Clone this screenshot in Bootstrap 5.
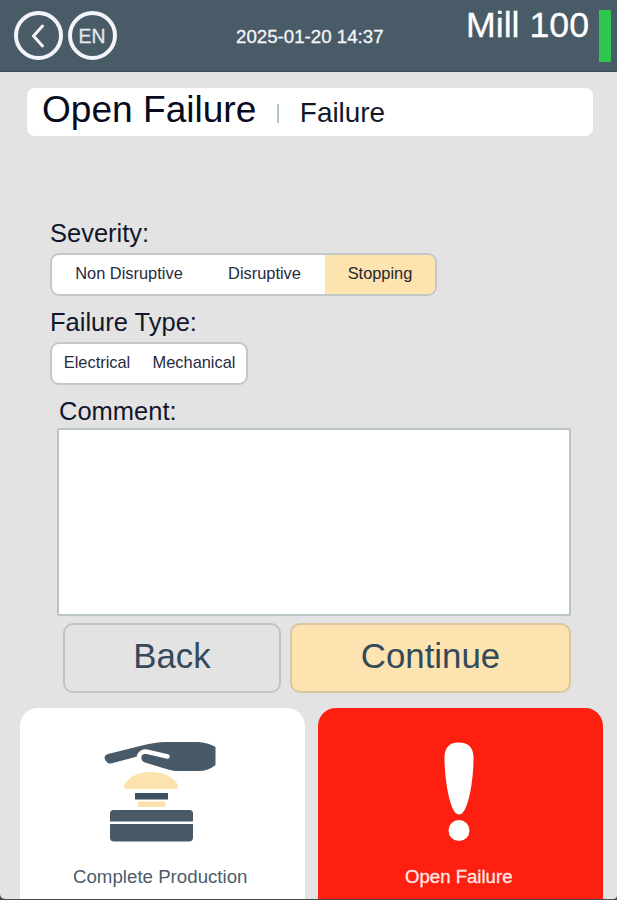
<!DOCTYPE html>
<html lang="en">
<head>
<meta charset="utf-8">
<meta name="viewport" content="width=device-width, initial-scale=1">
<title>Open Failure</title>
<link href="https://cdn.jsdelivr.net/npm/bootstrap@5.3.0/dist/css/bootstrap.min.css" rel="stylesheet">
<style>
body{background:#4a4a4a;font-family:"Liberation Sans",Arial,sans-serif;color:#12172b;height:900px;overflow:hidden;line-height:1}
.screen{height:899px;background:#e3e3e3;border-radius:0 0 4px 5px;overflow:hidden}
.topbar{height:72px;background:#4a5b68;border-bottom:1px solid #3d4b56;padding:0 6px 0 14px;color:#fff}
.round-btn{width:49px;height:49px;border:4px solid #f2f4fa;border-radius:50%;background:none;color:#e3e8ee;font-size:19.3px;padding:2px 0 0;-webkit-text-stroke:.3px #e3e8ee}
.round-btn.arrow{padding:0}
.round-btn + .round-btn{margin-left:4.5px}
.clock{font-size:18.7px;color:#f4f6f8;margin-left:119.5px;padding-top:3px;-webkit-text-stroke:.3px #f4f6f8}
.station{font-size:35.7px;height:52px;line-height:31px;-webkit-text-stroke:.3px #fff}
.status-bar{width:12px;height:52px;background:#2dc84d;margin-left:10px}
.title-box{margin:16px 24px 0 27px;height:48px;border-radius:8px;padding:0 15px}
.title-main{font-size:37.1px;line-height:42px;color:#070b1c}
.title-sub{font-size:27.9px;line-height:49px}
.divider{width:2px;height:19px;background:#b4c8c4;margin:2px 21px 0 20.5px}
.form-area{padding:84px 46px 0 50px}
.field-label{font-size:25.5px;line-height:26px;display:block;margin-bottom:7px}
.field-label.later{margin-top:13px}
.field-label.comment-label{padding-left:9px;margin-bottom:4px}
.seg{height:43px;border:2px solid #c2c8c8;border-radius:9px;background:#fff;overflow:hidden;width:max-content}
.seg button{border:0;background:none;padding:0 0 2px;color:#252b40;font-size:16.4px}
.seg .chosen{background:#fde3ae;color:#242832}
.w-a{width:154px}.w-b{width:119px}.seg .w-b{padding-right:2px}.w-c{width:110px}.w-d{width:90px}.w-e{width:104px}
.comment-box{display:block;width:514px;height:188px;margin:0 0 0 7px;border:2px solid #bac4c4;border-radius:2px;background:#fff;resize:none}
.actions{margin:7px 0 0 13px;gap:9px}
.act{height:70px;border:2px solid #c3c3c3;border-radius:10px;background:#e3e3e3;color:#34495a;font-size:34.8px;padding:0 0 4px}
.act-back{width:218px}
.act-go{width:281px;background:#fce3af;border-color:#d8c8a2}
.tiles{padding:0 14px 0 20px;gap:13px;margin-top:15px}
.tile{height:191px;border-radius:18px 18px 0 0;background:#fff;color:#4d5b68;font-size:18.7px;width:285px;border:0;padding:32px 4px 0 0}
.tile svg{display:block;margin-bottom:24px}
.tile-alert{background:#fd1f10;color:#ffe9e6;width:286px;padding-right:3px;font-size:18.6px}
.tile-alert span{-webkit-text-stroke:.3px #ffe9e6}
</style>
</head>
<body>
<div class="screen">
<header class="topbar d-flex align-items-center">
  <button class="round-btn arrow d-flex align-items-center justify-content-center" aria-label="Back">
    <svg width="14" height="24" viewBox="0 0 14 24" fill="none" stroke="#f2f4f8" stroke-width="3" stroke-linecap="round"><path d="M10.500 2 1.500 12l9 10"/></svg>
  </button>
  <button class="round-btn">EN</button>
  <span class="clock">2025-01-20 14:37</span>
  <span class="station ms-auto">Mill 100</span>
  <span class="status-bar"></span>
</header>
<section class="title-box bg-white d-flex">
  <span class="title-main">Open Failure</span>
  <span class="divider align-self-center"></span>
  <span class="title-sub">Failure</span>
</section>
<main class="form-area">
  <span class="field-label">Severity:</span>
  <div class="seg d-flex"><button class="w-a">Non Disruptive</button><button class="w-b">Disruptive</button><button class="w-c chosen">Stopping</button></div>
  <span class="field-label later">Failure Type:</span>
  <div class="seg d-flex"><button class="w-d">Electrical</button><button class="w-e">Mechanical</button></div>
  <label class="field-label later comment-label" for="comment">Comment:</label>
  <textarea class="comment-box" id="comment"></textarea>
  <div class="actions d-flex"><button class="act act-back">Back</button><button class="act act-go">Continue</button></div>
</main>
<nav class="tiles d-flex">
  <button class="tile d-flex flex-column align-items-center">
    <svg width="114" height="104" viewBox="0 0 114 104">
      <path fill="#485a68" d="M2.500 20.500 C.5 17.500 2 15 5 14 L39 5.500 Q53 2 62 2 L96 2 Q106 3 112.500 7 V25 Q105 31 96 31 H72 Q66 30 60 28 L42 22.500 Q38 21 38.500 17.500 L38 15.500 L8 23.500 Q4.500 24 2.500 20.500Z"/>
      <path fill="none" stroke="#fff" stroke-width="4.500" stroke-linecap="round" stroke-linejoin="round" d="M36 16 Q38 11.500 43 11.500 L64.500 16.500"/>
      <path fill="#fce2ad" d="M22 49 Q19 45 25 40 Q33 32 48 32 Q63 32 71 40 Q77 45 74 49Z"/>
      <path fill="#3f5264" d="M32 53h33v6.500H32z"/><path fill="#fce2ad" d="M35 61.500h27.500v5.500H35z"/>
      <path fill="#485a68" d="M10.500 70h76q3.500 0 3.500 3.500V81.500H7V73.500q0-3.500 3.500-3.500zM7 84h83v13.500q0 4-4 4H11q-4 0-4-4z"/>
    </svg>
    <span>Complete Production</span>
  </button>
  <button class="tile tile-alert d-flex flex-column align-items-center">
    <svg width="36" height="104" viewBox="0 0 36 104" fill="#fff"><path d="M17.500 2.500 C8 2.500 3.500 8 3.500 18 C3.500 36 7 57 11 67 Q14 74.500 18 74.500 Q22 74.500 25 67 C30 55 32.500 34 32.500 18 C32.500 8 28 2.500 17.500 2.500Z"/><circle cx="18" cy="90.500" r="10.500"/></svg>
    <span>Open Failure</span>
  </button>
</nav>
</div>
<script src="https://cdn.jsdelivr.net/npm/bootstrap@5.3.0/dist/js/bootstrap.bundle.min.js"></script>
</body>
</html>
